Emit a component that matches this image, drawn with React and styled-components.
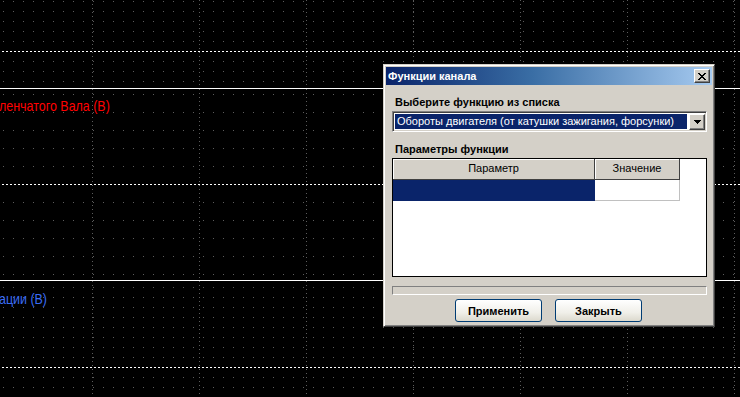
import * as React from 'react'
import styled, { createGlobalStyle } from 'styled-components'

const GlobalStyle = createGlobalStyle`
  html, body {
    margin: 0;
    padding: 0;
    background: #000;
    overflow: hidden;
  }
`

// +--------------------------------------+
// | channel A (88)                       |
// +--------------------------------------+ solid 1px
// | channel B (191)          +--------+  |
// |                          | dialog |  |
// +--------------------------+        +--+ solid 1px
// | channel C (116)          +--------+  |
// +--------------------------------------+
const Screen = styled.div`
  position: relative;
  width: 740px;
  height: 397px;
  background: #000;
  overflow: hidden;
  display: flex;
  flex-direction: column;
  font-family: 'Liberation Sans', Arial, sans-serif;
`

const Channel = styled.div`
  position: relative;
  height: ${(p) => p.$h}px;
  flex: none;
`

const Divider = styled.div`
  height: 1px;
  background: #fff;
  flex: none;
`

const GridSvg = styled.svg`
  position: absolute;
  left: 0;
  top: 0;
  display: block;
`

const Caption = styled.div`
  position: relative;
  padding-top: ${(p) => p.$top}px;
  margin-left: -1px;
  font-size: 15px;
  line-height: 17px;
  color: ${(p) => p.$color};
  white-space: nowrap;
  transform: scaleX(0.83);
  transform-origin: left top;
`

function ChartGrid({ height, offset, step, dashed }) {
  const rows = []
  for (let y = offset, i = 0; y < height; y += step, i++) {
    rows.push({ y, dashed: i === dashed })
  }
  const cols = []
  for (let x = 92; x < 740; x += 107) cols.push(x)
  return (
    <GridSvg width="740" height={height} shapeRendering="crispEdges">
      {cols.map((x) => (
        <line
          key={'c' + x}
          x1={x + 0.5}
          x2={x + 0.5}
          y1="0"
          y2={height}
          stroke="#5c5c5c"
          strokeDasharray="1 3"
        />
      ))}
      {rows.map((r) =>
        r.dashed ? (
          <line key={r.y} x1="2" x2="740" y1={r.y + 0.5} y2={r.y + 0.5} stroke="#fff" strokeDasharray="2 2" />
        ) : (
          <line key={r.y} x1="3" x2="740" y1={r.y + 0.5} y2={r.y + 0.5} stroke="#5c5c5c" strokeDasharray="1 9" />
        )
      )}
    </GridSvg>
  )
}

/* ---------- dialog ---------- */

const Window = styled.div`
  position: absolute;
  left: 383px;
  top: 64px;
  width: 332px;
  height: 263px;
  box-sizing: border-box;
  background: #d4d0c8;
  border: 1px solid;
  border-color: #d4d0c8 #404040 #404040 #d4d0c8;
  box-shadow: inset 1px 1px #fff, inset -1px -1px #808080;
  padding: 2px;
  display: flex;
  flex-direction: column;
  font-family: 'Liberation Sans', Arial, sans-serif;
  font-size: 11px;
  color: #000;
`

const TitleBar = styled.div`
  height: 18px;
  flex: none;
  display: flex;
  align-items: center;
  justify-content: space-between;
  padding: 0 2px 0 2px;
  background: linear-gradient(to right, #0a246a 0%, #3a6ea5 45%, #a6caf0 100%);
  color: #fff;
  font-weight: bold;
`

const TitleText = styled.span`
  line-height: 14px;
`

const RaisedButton = styled.div`
  box-sizing: border-box;
  width: ${(p) => p.$w}px;
  height: ${(p) => p.$h}px;
  flex: none;
  background: #d4d0c8;
  border: 1px solid;
  border-color: #fff #404040 #404040 #fff;
  box-shadow: inset -1px -1px #808080;
  display: flex;
  align-items: center;
  justify-content: center;
`

const Body = styled.div`
  flex: 1;
  display: flex;
  flex-direction: column;
  padding: 0 5px 0 6px;
`

const Label = styled.div`
  margin-top: ${(p) => p.$mt}px;
  padding-left: 3px;
  font-weight: bold;
  line-height: 13px;
`

const Combo = styled.div`
  margin-top: 2px;
  height: 21px;
  box-sizing: border-box;
  border: 1px solid;
  border-color: #808080 #fff #fff #808080;
  box-shadow: inset 1px 1px #404040, inset -1px -1px #d4d0c8;
  background: #fff;
  padding: 2px 1px 2px 2px;
  display: flex;
  align-items: center;
  gap: 2px;
`

const ComboValue = styled.div`
  flex: 1;
  height: 15px;
  background: #0a246a;
  color: #fff;
  line-height: 15px;
  padding-left: 2px;
  white-space: nowrap;
  overflow: hidden;
`

const Table = styled.div`
  margin-top: 2px;
  height: 119px;
  box-sizing: border-box;
  border: 1px solid #000;
  background: #fff;
  display: flex;
  flex-direction: column;
`

const Row = styled.div`
  display: flex;
  height: ${(p) => p.$h}px;
`

const HeadCell = styled.div`
  box-sizing: border-box;
  width: ${(p) => p.$w}px;
  background: #d4d0c8;
  border-right: 1px solid #404040;
  border-bottom: 1px solid #404040;
  box-shadow: inset 1px 1px #fff;
  text-align: center;
  line-height: 18px;
`

const Cell = styled.div`
  box-sizing: border-box;
  width: ${(p) => p.$w}px;
  background: ${(p) => (p.$selected ? '#0a246a' : '#fff')};
  border-right: 1px solid ${(p) => (p.$selected ? '#0a246a' : '#c0c0c0')};
  border-bottom: 1px solid ${(p) => (p.$selected ? '#0a246a' : '#c0c0c0')};
`

const Progress = styled.div`
  margin-top: 9px;
  height: 9px;
  box-sizing: border-box;
  border: 1px solid;
  border-color: #808080 #fff #fff #808080;
  background: #d4d0c8;
`

const Buttons = styled.div`
  margin-top: 4px;
  display: flex;
  justify-content: center;
  gap: 13px;
  padding-right: 2px;
`

const PushButton = styled.button`
  width: 87px;
  height: 23px;
  box-sizing: border-box;
  border: 1px solid #003c74;
  border-radius: 3px;
  background: linear-gradient(to bottom, #ffffff 0%, #f0efe9 60%, #dcd9cd 100%);
  font-family: 'Liberation Sans', Arial, sans-serif;
  font-size: 11px;
  font-weight: bold;
  color: #000;
  padding: 0;
`

function CloseGlyph() {
  return (
    <svg width="8" height="7" viewBox="0 0 8 7" shapeRendering="crispEdges">
      <path d="M0 0h2v1h-2zM6 0h2v1h-2zM1 1h2v1h-2zM5 1h2v1h-2zM2 2h4v1h-4zM3 3h2v1h-2zM2 4h4v1h-4zM1 5h2v1h-2zM5 5h2v1h-2zM0 6h2v1h-2zM6 6h2v1h-2z" fill="#000" />
    </svg>
  )
}

function ArrowGlyph() {
  return (
    <svg width="7" height="4" viewBox="0 0 7 4" shapeRendering="crispEdges">
      <path d="M0 0h7v1h-7zM1 1h5v1h-5zM2 2h3v1h-3zM3 3h1v1h-1z" fill="#000" />
    </svg>
  )
}

function ChannelDialog() {
  return (
    <Window>
      <TitleBar>
        <TitleText>Функции канала</TitleText>
        <RaisedButton $w={16} $h={14}>
          <CloseGlyph />
        </RaisedButton>
      </TitleBar>
      <Body>
        <Label $mt={11}>Выберите функцию из списка</Label>
        <Combo>
          <ComboValue>Обороты двигателя (от катушки зажигания, форсунки)</ComboValue>
          <RaisedButton $w={16} $h={16}>
            <ArrowGlyph />
          </RaisedButton>
        </Combo>
        <Label $mt={11}>Параметры функции</Label>
        <Table>
          <Row $h={21}>
            <HeadCell $w={202}>Параметр</HeadCell>
            <HeadCell $w={85}>Значение</HeadCell>
          </Row>
          <Row $h={21}>
            <Cell $w={202} $selected />
            <Cell $w={85} />
          </Row>
        </Table>
        <Progress />
        <Buttons>
          <PushButton>Применить</PushButton>
          <PushButton>Закрыть</PushButton>
        </Buttons>
      </Body>
    </Window>
  )
}

export default function App() {
  return (
    <>
      <GlobalStyle />
      <Screen>
        <Channel $h={88}>
          <ChartGrid height={88} offset={1} step={10} dashed={5} />
        </Channel>
        <Divider />
        <Channel $h={191}>
          <ChartGrid height={191} offset={5} step={18} dashed={5} />
          <Caption $top={8} $color="#ff0000">ленчатого Вала (В)</Caption>
        </Channel>
        <Divider />
        <Channel $h={116}>
          <ChartGrid height={116} offset={6} step={10} dashed={8} />
          <Caption $top={9} $color="#3a6cf4">ации (В)</Caption>
        </Channel>
        <ChannelDialog />
      </Screen>
    </>
  )
}
